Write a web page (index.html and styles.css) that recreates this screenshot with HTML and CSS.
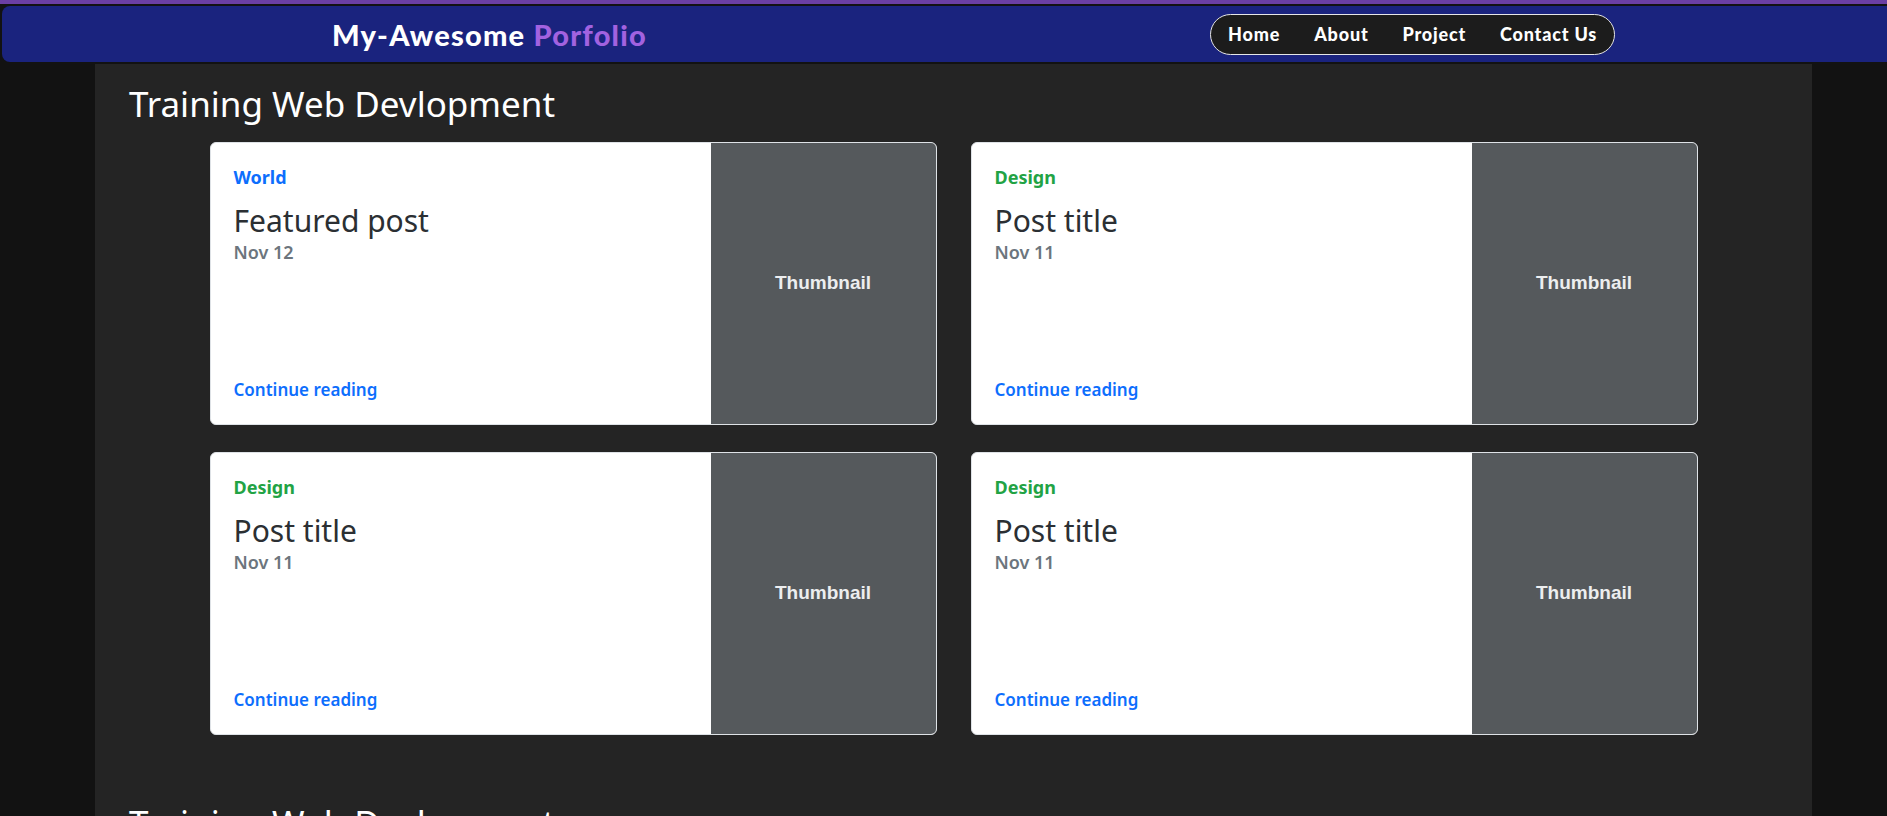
FILE: index.html
```html
<!DOCTYPE html>
<html lang="en">
<head>
<meta charset="utf-8">
<title>My-Awesome Porfolio</title>
<link rel="stylesheet" href="styles.css">
</head>
<body>
<header class="site-header">
  <nav class="navbar">
    <a class="brand" href="#">My-Awesome <span class="brand-accent">Porfolio</span></a>
    <ul class="nav-pill">
      <li><a href="#">Home</a></li>
      <li><a href="#">About</a></li>
      <li><a href="#">Project</a></li>
      <li><a href="#">Contact Us</a></li>
    </ul>
  </nav>
</header>
<main class="content">
  <section class="section">
    <h2 class="section-title">Training Web Devlopment</h2>
    <div class="card-grid">
      <article class="post-card">
        <div class="post-body">
          <strong class="category cat-world">World</strong>
          <h3 class="post-title">Featured post</h3>
          <div class="post-date">Nov 12</div>
          <a class="read-more" href="#">Continue reading</a>
        </div>
        <div class="thumb">Thumbnail</div>
      </article>
      <article class="post-card">
        <div class="post-body">
          <strong class="category cat-design">Design</strong>
          <h3 class="post-title">Post title</h3>
          <div class="post-date">Nov 11</div>
          <a class="read-more" href="#">Continue reading</a>
        </div>
        <div class="thumb">Thumbnail</div>
      </article>
      <article class="post-card">
        <div class="post-body">
          <strong class="category cat-design">Design</strong>
          <h3 class="post-title">Post title</h3>
          <div class="post-date">Nov 11</div>
          <a class="read-more" href="#">Continue reading</a>
        </div>
        <div class="thumb">Thumbnail</div>
      </article>
      <article class="post-card">
        <div class="post-body">
          <strong class="category cat-design">Design</strong>
          <h3 class="post-title">Post title</h3>
          <div class="post-date">Nov 11</div>
          <a class="read-more" href="#">Continue reading</a>
        </div>
        <div class="thumb">Thumbnail</div>
      </article>
    </div>
  </section>
  <section class="section">
    <h2 class="section-title">Training Web Devlopment</h2>
  </section>
</main>
</body>
</html>
```
FILE: styles.css
```css
* { box-sizing: border-box; }

html, body {
  margin: 0;
  padding: 0;
}

body {
  background: #121212;
  font-family: "Noto Sans", "Open Sans", sans-serif;
  font-size: 18px;
  line-height: 1.5;
  color: #212529;
  overflow: hidden;
}

.site-header {
  border-top: 4px solid #6b3fa3;
  padding: 2px 0 2px 2px;
}

.navbar {
  display: flex;
  align-items: center;
  height: 56px;
  background: #1a237e;
  border-radius: 8px 0 0 8px;
  padding-left: 330px;
  padding-right: 272px;
}

.brand {
  font-family: "Lato", "Liberation Sans", sans-serif;
  font-weight: 900;
  font-size: 29px;
  line-height: 1;
  color: #ffffff;
  text-decoration: none;
  letter-spacing: 1.2px;
}

.brand-accent {
  color: #a262e0;
}

.nav-pill {
  display: flex;
  align-items: center;
  gap: 34px;
  margin: 0 0 0 auto;
  padding: 0 17px;
  height: 41px;
  list-style: none;
  background: #1c1c1c;
  border: 1px solid #e6e6e6;
  border-radius: 21px;
}

.nav-pill a {
  font-family: "Lato", "Liberation Sans", sans-serif;
  font-weight: 900;
  font-size: 18px;
  letter-spacing: 0.8px;
  color: #ffffff;
  text-decoration: none;
}

.content {
  margin-left: 95px;
  width: 1717px;
  background: #242424;
  padding: 0 34px;
  min-height: 760px;
}

.section {
  padding-top: 19px;
  padding-bottom: 48px;
}

.section-title {
  margin: 0 0 17px;
  font-weight: 400;
  font-size: 35px;
  line-height: 1.2;
  color: #ffffff;
}

.card-grid {
  display: grid;
  grid-template-columns: 1fr 1fr;
  column-gap: 34px;
  row-gap: 27px;
  width: 1488px;
  margin: 0 auto;
}

.post-card {
  display: flex;
  height: 283px;
  background: #ffffff;
  border: 1px solid #dee2e6;
  border-radius: 6px;
  overflow: hidden;
}

.post-body {
  flex: 1;
  display: flex;
  flex-direction: column;
  align-items: flex-start;
  padding: 21px 23px 22px;
}

.category {
  display: inline-block;
  margin-bottom: 12px;
  font-weight: 700;
  font-size: 18px;
}

.cat-world { color: #0d6efd; }
.cat-design { color: #22a344; }

.post-title {
  margin: 0;
  font-weight: 400;
  font-size: 30px;
  line-height: 1.2;
  color: #2b2f33;
}

.post-date {
  margin-bottom: 4px;
  font-weight: 600;
  font-size: 18px;
  line-height: 1.5;
  color: #6c757d;
}

.read-more {
  margin-top: auto;
  font-weight: 600;
  font-size: 17px;
  color: #0d6efd;
  text-decoration: none;
}

.thumb {
  flex: 0 0 225px;
  display: flex;
  align-items: center;
  justify-content: center;
  background: #55595c;
  color: #eceeef;
  font-family: "Liberation Sans", Arial, sans-serif;
  font-weight: 700;
  font-size: 19px;
}
```
